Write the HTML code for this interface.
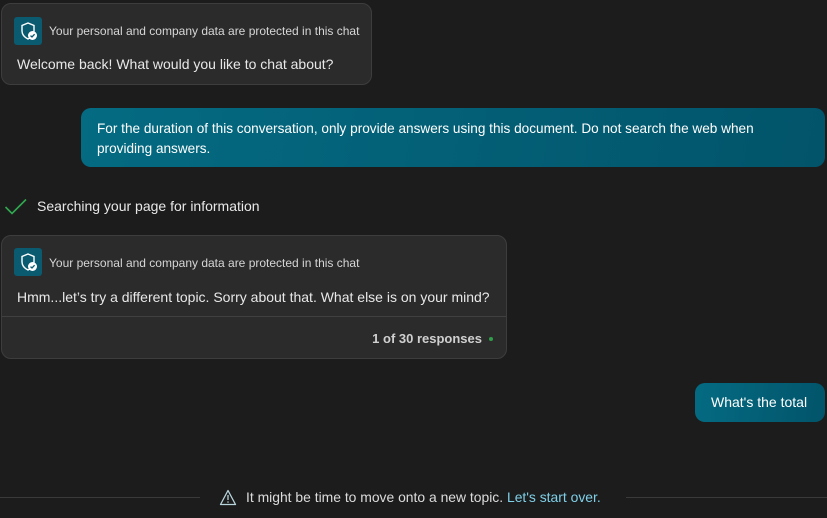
<!DOCTYPE html>
<html><head><meta charset="utf-8"><style>
*{margin:0;padding:0;box-sizing:border-box}
body{width:827px;height:518px;background:#1c1c1c;font-family:"Liberation Sans",sans-serif;color:#e6e6e6;position:relative;overflow:hidden}
.card{position:absolute;background:#2b2b2b;border:1px solid #3d3d3d;border-radius:10px}
.icon{position:absolute;width:28px;height:28px;border-radius:3px;background:#0a5a70}
.hdr{position:absolute;font-size:12px;color:#d6d6d6;white-space:nowrap}
.body{position:absolute;font-size:14px;color:#e8e8e8;white-space:nowrap}
.user{position:absolute;background:linear-gradient(100deg,#046b82,#02546a);border-radius:10px;color:#fff;font-size:13.6px}
</style></head><body>
<div class="card" style="left:1px;top:3px;width:371px;height:82px">
 <div class="icon" style="left:12px;top:13px"><svg width="28" height="28" viewBox="0 0 28 28"><path d="M14 6 L20 8.5 V14 C20 18 17 20.5 14 22 C11 20.5 8 18 8 14 V8.5 Z" fill="none" stroke="#fff" stroke-width="1.4"/><circle cx="18.5" cy="18.5" r="4.5" fill="#fff"/><path d="M16.5 18.6 L18 20 L20.6 17.2" fill="none" stroke="#0a5a70" stroke-width="1.3"/></svg></div>
 <div class="hdr" style="left:47px;top:20px">Your personal and company data are protected in this chat</div>
 <div class="body" style="left:15px;top:52px">Welcome back! What would you like to chat about?</div>
</div>
<div class="user" style="left:81px;top:108px;width:744px;height:59px;padding:11px 40px 0 16px;line-height:20px">For the duration of this conversation, only provide answers using this document. Do not search the web when providing answers.</div>
<svg style="position:absolute;left:4px;top:198px" width="24" height="18" viewBox="0 0 24 18"><path d="M1.5 9 L8 15.5 L22 1.5" fill="none" stroke="#2fa84f" stroke-width="1.6"/></svg>
<div class="body" style="left:37px;top:198px">Searching your page for information</div>
<div class="card" style="left:1px;top:235px;width:506px;height:124px">
 <div class="icon" style="left:12px;top:12px"><svg width="28" height="28" viewBox="0 0 28 28"><path d="M14 6 L20 8.5 V14 C20 18 17 20.5 14 22 C11 20.5 8 18 8 14 V8.5 Z" fill="none" stroke="#fff" stroke-width="1.4"/><circle cx="18.5" cy="18.5" r="4.5" fill="#fff"/><path d="M16.5 18.6 L18 20 L20.6 17.2" fill="none" stroke="#0a5a70" stroke-width="1.3"/></svg></div>
 <div class="hdr" style="left:47px;top:20px">Your personal and company data are protected in this chat</div>
 <div class="body" style="left:15px;top:53px">Hmm...let’s try a different topic. Sorry about that. What else is on your mind?</div>
 <div style="position:absolute;left:0;right:0;top:80px;border-top:1px solid #404040"></div>
 <div style="position:absolute;right:24px;top:95px;font-size:13px;font-weight:bold;color:#d0d0d0">1 of 30 responses</div>
 <div style="position:absolute;left:487px;top:101px;width:4px;height:4px;border-radius:50%;background:#2e9e4a"></div>
</div>
<div class="user" style="left:695px;top:383px;width:130px;height:39px;padding:11px 0 0 16px;font-size:14px">What's the total</div>
<div style="position:absolute;left:0;top:497px;width:200px;border-top:1px solid #3a3a3a"></div>
<div style="position:absolute;left:626px;top:497px;width:201px;border-top:1px solid #3a3a3a"></div>
<svg style="position:absolute;left:219px;top:489px" width="18" height="17" viewBox="0 0 18 17"><path d="M9 1.5 L16.5 15.5 H1.5 Z" fill="none" stroke="#b8d4dc" stroke-width="1.3" stroke-linejoin="round"/><path d="M9 6 V11" stroke="#b8d4dc" stroke-width="1.3"/><circle cx="9" cy="13" r=".8" fill="#b8d4dc"/></svg>
<div class="body" style="left:246px;top:489px;font-size:13.9px;color:#dcdcdc">It might be time to move onto a new topic. <span style="color:#7fd0e8">Let's start over.</span></div>
</body></html>
